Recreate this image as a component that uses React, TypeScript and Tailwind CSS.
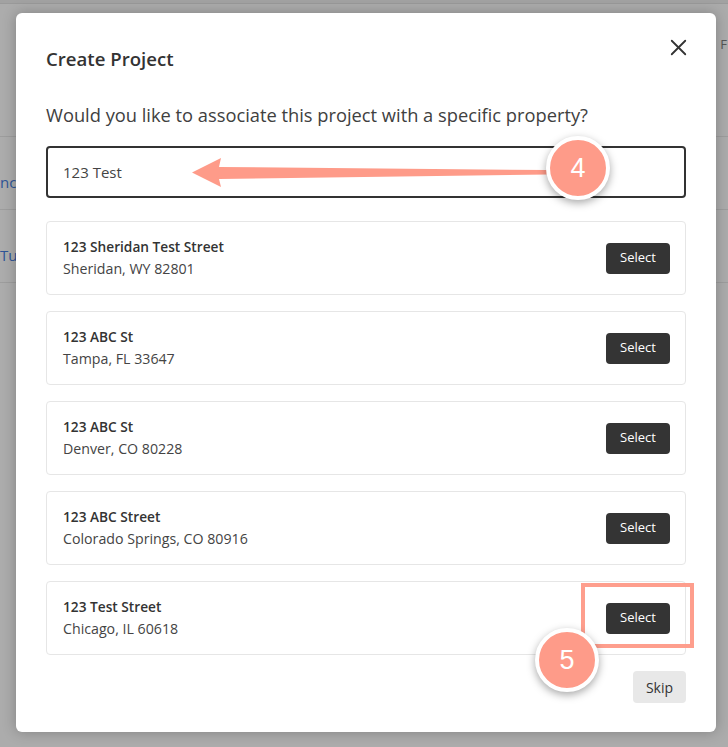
import { X } from "lucide-react";

const properties = [
  { street: "123 Sheridan Test Street", city: "Sheridan, WY 82801" },
  { street: "123 ABC St", city: "Tampa, FL 33647" },
  { street: "123 ABC St", city: "Denver, CO 80228" },
  { street: "123 ABC Street", city: "Colorado Springs, CO 80916" },
  { street: "123 Test Street", city: "Chicago, IL 60618" },
];

function PropertyCard({ street, city }: { street: string; city: string }) {
  return (
    <div className="flex items-center justify-between h-[74px] rounded border border-[#e6e6e6] pl-4 pr-[15px]">
      <div className="flex flex-col leading-[22px]">
        <span className="text-[13.7px] font-semibold text-[#333]">{street}</span>
        <span className="text-[14.2px] text-[#444]">{city}</span>
      </div>
      <button className="h-[31px] w-[64px] rounded-sm bg-[#343434] text-[13px] text-white">Select</button>
    </div>
  );
}

function Background() {
  return (
    <div className="absolute inset-0 bg-[#acacac]" style={{ fontFamily: "'Open Sans', sans-serif" }}>
      <div className="h-[4px] border-b border-[#9a9a9a] bg-[#a2a2a2]" />
      <div className="flex justify-end h-[132px]">
        <span className="mt-[31px] mr-[1px] text-[13px] text-[#555]">F</span>
      </div>
      {["nce", "Tu"].map((t) => (
        <div key={t} className="flex h-[73px] border-t border-[#9d9d9d] pt-[35px] text-[15px] leading-[20px] text-[#2f5597]">
          <span>{t}</span>
        </div>
      ))}
      <div className="border-t border-[#9d9d9d]" />
    </div>
  );
}

function Badge({ n, className }: { n: string; className: string }) {
  return (
    <div
      className={`absolute flex h-[64px] w-[64px] items-center justify-center rounded-full border-[4px] border-white bg-[#fe9b89] text-[27px] text-white shadow-[0_3px_8px_rgba(0,0,0,0.35)] ${className}`}
      style={{ fontFamily: "'Liberation Sans', Arial, sans-serif" }}
    >
      {n}
    </div>
  );
}

export default function App() {
  return (
    <div className="relative h-[747px] w-full overflow-hidden" style={{ fontFamily: "'Open Sans', 'Noto Sans', sans-serif" }}>
      <Background />

      <div className="absolute left-[16px] top-[13px] flex h-[719px] w-[700px] flex-col rounded-md bg-white px-[30px] pt-[28px] shadow-[0_0_14px_rgba(0,0,0,0.25)]">
        <div className="flex h-[30px] items-start justify-between">
          <h2 className="mt-[6px] text-[18.6px] leading-[24px] font-semibold text-[#333]">Create Project</h2>
          <X className="-mr-[6px] -mt-[7px] h-[27px] w-[27px] text-[#333]" strokeWidth={1.6} />
        </div>

        <p className="mt-[32px] text-[18.3px] leading-[24px] text-[#404040]">
          Would you like to associate this project with a specific property?
        </p>

        <div className="mt-[19px] flex h-[52px] items-center rounded border-2 border-[#333] pl-[15px] text-[15px] text-[#444]">
          123 Test
        </div>

        <div className="mt-[23px] flex flex-col gap-4">
          {properties.map((p, i) => (
            <PropertyCard key={i} street={p.street} city={p.city} />
          ))}
        </div>

        <div className="mt-4 flex justify-end">
          <button className="h-[32px] w-[53px] rounded-sm bg-[#e8e8e8] text-[14px] text-[#333]">Skip</button>
        </div>
      </div>

      {/* annotations */}
      <svg className="absolute left-0 top-0" width="728" height="747">
        <polygon points="192,172.5 221,158 219,167 548,170 548,174.5 219,179 221,187" fill="#fe9b89" />
      </svg>
      <Badge n="4" className="left-[546px] top-[136px]" />
      <div className="absolute left-[581px] top-[583px] h-[65px] w-[113px] border-[4px] border-[#fe9e8d]" />
      <Badge n="5" className="left-[535px] top-[628px]" />
    </div>
  );
}
